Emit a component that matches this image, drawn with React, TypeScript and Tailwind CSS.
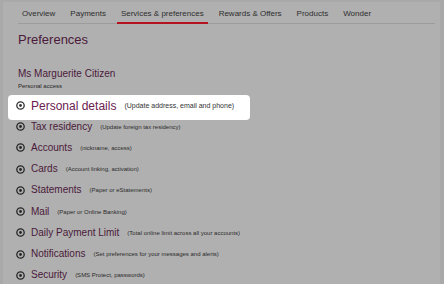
const tabs = ['Overview', 'Payments', 'Services & preferences', 'Rewards & Offers', 'Products', 'Wonder'];

const items: { title: string; note: string }[] = [
  { title: 'Tax residency', note: '(Update foreign tax residency)' },
  { title: 'Accounts', note: '(nickname, access)' },
  { title: 'Cards', note: '(Account linking, activation)' },
  { title: 'Statements', note: '(Paper or eStatements)' },
  { title: 'Mail', note: '(Paper or Online Banking)' },
  { title: 'Daily Payment Limit', note: '(Total online limit across all your accounts)' },
  { title: 'Notifications', note: '(Set preferences for your messages and alerts)' },
  { title: 'Security', note: '(SMS Protect, passwords)' },
];

function ExpandIcon({ color }: { color: string }) {
  return (
    <svg width="9" height="9" viewBox="0 0 9 9" className="shrink-0">
      <circle cx="4.5" cy="4.5" r="3.7" fill="none" stroke={color} strokeWidth="1.3" />
      <circle cx="4.5" cy="4.5" r="1.4" fill={color} />
    </svg>
  );
}

export default function App() {
  return (
    <div
      className="w-[444px] h-[284px] overflow-hidden bg-[#a9a9a9] pl-[3px] pr-[4px] pt-[2px] antialiased"
      style={{ fontFamily: '"Liberation Sans", Arial, sans-serif' }}
    >
      <div className="h-full bg-[#b0b0b0] pl-[15px] pr-[5px]">
        {/* tabs */}
        <div className="flex gap-[7px] border-b border-[#9c9c9c]">
          {tabs.map(tab => (
            <div
              key={tab}
              className={`px-[4px] pt-[7px] pb-[3px] text-[8px] leading-[10px] text-[#2e2e2e] -mb-px border-b-2 ${
                tab === 'Services & preferences' ? 'border-[#b3131f]' : 'border-transparent'
              }`}
            >
              {tab}
            </div>
          ))}
        </div>

        <h1 className="mt-[8px] text-[13px] leading-[16px] text-[#4b1a3a]">Preferences</h1>

        <div className="mt-[20px] text-[10px] leading-[12px] text-[#4b1a3a]">Ms Marguerite Citizen</div>
        <div className="mt-[2px] text-[6px] leading-[8px] text-[#262626]">Personal access</div>

        <div className="mt-[5px]">
          <div className="relative z-10 ml-[-10px] w-[242px] h-[25px] -mb-[4px] bg-white rounded-[4px] flex items-center pl-[8px] pb-[4px]">
            <ExpandIcon color="#333333" />
            <span className="ml-[6px] text-[12px] leading-[14px] text-[#6a2050]">Personal details</span>
            <span className="ml-[8px] text-[7px] leading-[9px] text-[#333333]">(Update address, email and phone)</span>
          </div>
          {items.map(item => (
            <div key={item.title} className="h-[21.25px] flex items-center -ml-[2px]">
              <ExpandIcon color="#262626" />
              <span className="ml-[6px] text-[10px] leading-[12px] text-[#4b1a3a]">{item.title}</span>
              <span className="ml-[8px] text-[6px] leading-[8px] text-[#2b2b2b]">{item.note}</span>
            </div>
          ))}
        </div>
      </div>
    </div>
  );
}
